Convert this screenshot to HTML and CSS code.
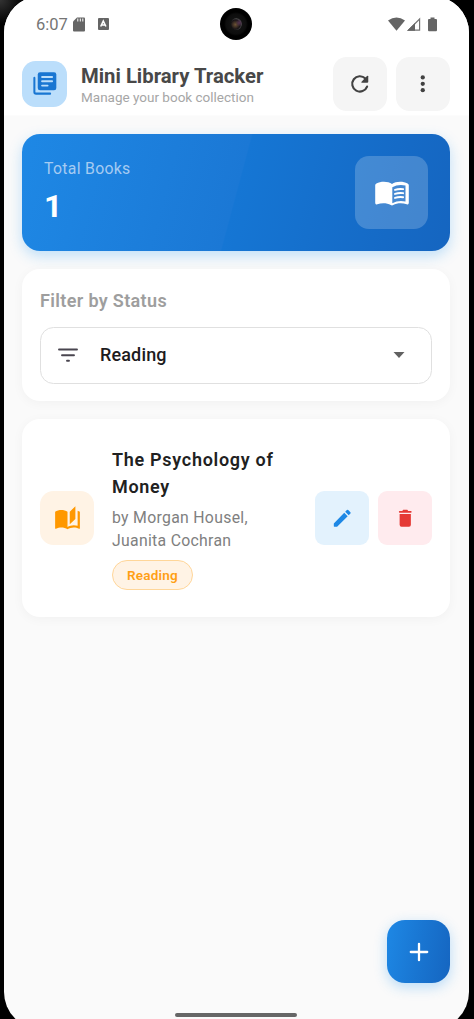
FILE: index.html
```html
<!DOCTYPE html>
<html lang="en">
<head>
<meta charset="utf-8">
<title>Mini Library Tracker</title>
<link rel="stylesheet" href="styles.css">
</head>
<body>
<div class="device">
<div class="screen">
  <div class="statusbar">
    <span class="clock">6:07</span>
    <svg class="sd" viewBox="0 0 12 15"><path fill="#656565" d="M4 .5h7q1 0 1 1v12q0 1-1 1H1q-1 0-1-1v-9z"/><path stroke="#fff" stroke-width="1" d="M4.800 1.500v3M7.300 1.500v3M9.800 1.500v3"/></svg>
    <svg class="abadge" viewBox="0 0 11 12"><rect width="11" height="12" rx="1" fill="#656565"/><path fill="none" stroke="#fff" stroke-width="1.600" d="M2.700 8.500 5.300 3l2.600 5.500M3.800 7h3"/></svg>
    <svg class="signals" viewBox="0 0 50 15"><path fill="#656565" d="M0 3.600Q8.500-2.600 17 3.600L8.500 13.800z"/><path fill="none" stroke="#757575" stroke-width="1.200" d="M20.500 13.200H31.600V2z"/><path fill="#656565" d="M19 13.800 27 6v7.800zM42.500.4h4V2H48q1 0 1 1v10q0 1.200-1 1.200h-7q-1 0-1-1.200V3q0-1 1-1h1.500z"/></svg>
    <div class="camera"><i></i></div>
  </div>
  <header class="appbar">
    <div class="logo"><svg viewBox="0 0 24 24" width="27" height="27"><path fill="none" stroke="#1976d2" stroke-width="1.800" stroke-linecap="round" stroke-linejoin="round" d="M3 7v12.500Q3 21 4.500 21H17"/><rect x="6" y="2" width="16.500" height="16" rx="2" fill="#1976d2"/><path stroke="#bbdefb" stroke-width="1.600" stroke-linecap="round" d="M9.800 6.200h9M9.800 10h9M9.800 13.800h5"/></svg></div>
    <div class="heading"><h1>Mini Library Tracker</h1><p>Manage your book collection</p></div>
    <button class="tool"><svg viewBox="0 0 24 24" width="27" height="27"><path fill="none" stroke="#424242" stroke-width="2" stroke-linecap="round" d="M18.900 14.600A7.200 7.200 0 1 1 17.300 7.100"/><path fill="#424242" d="M20 5v5q0 1-1 1h-5q-1 0-.3-.8L18.800 4.700q1.200-.8 1.200.3z"/></svg></button>
    <button class="tool"><svg viewBox="0 0 24 24" width="27" height="27" fill="#424242"><circle cx="12" cy="6" r="2"/><circle cx="12" cy="12" r="2"/><circle cx="12" cy="18" r="2"/></svg></button>
  </header>
  <main class="content">
    <section class="total">
      <div><p class="total-label">Total Books</p><p class="total-count">1</p></div>
      <div class="total-icon"><svg viewBox="0 0 24 24" width="36" height="36"><path fill="#fff" d="M12 6C9.500 4 4.500 4 1.600 5.600Q.8 6 .8 6.800V18.500q0 1.500 1.400 1C5 18.500 8.800 18.600 11.200 20q.8.500 1.600 0c2.400-1.400 6.200-1.500 9-.5q1.400.5 1.400-1V6.800q0-.8-.8-1.200C19.500 4 14.500 4 12 6z"/><path fill="#4689d2" d="M12.200 8.200Q16 5.900 21 7v10.700q-4.800-1-8.800 1.100z"/><path fill="none" stroke="#fff" stroke-width="1.300" stroke-linecap="round" d="M14 9.900q2.500-.9 5.400-.5M14 12.600q2.500-.9 5.400-.5M14 15.300q2.500-.9 5.400-.5"/></svg></div>
    </section>
    <section class="card filter">
      <h2>Filter by Status</h2>
      <div class="select">
        <svg viewBox="0 0 20 14" width="20" height="14"><path stroke="#49454f" stroke-width="1.900" stroke-linecap="round" d="M1 1.500h18M4 7.200h12M9 12.700h2"/></svg>
        <span>Reading</span>
        <svg class="caret" viewBox="0 0 12 6" width="12" height="6"><path fill="#616161" d="M.5 0h11L6 6z"/></svg>
      </div>
    </section>
    <section class="card book">
      <div class="cover"><svg viewBox="0 0 24 24" width="27" height="27" fill="#ff9800"><path d="M19 1l-5 5v11l5-4.500zM1 6v14.650c0 .25.25.5.5.5.1 0 .15-.05.25-.05C3.100 20.450 5.050 20 6.500 20c1.950 0 4.050.4 5.500 1.500V6c-1.450-1.100-3.550-1.500-5.500-1.500S2.450 4.900 1 6zM23 19.500V6c-.6-.45-1.250-.75-2-1v13.500c-1.100-.35-2.300-.5-3.500-.5-1.700 0-4.150.65-5.500 1.500v2c1.350-.85 3.800-1.500 5.500-1.500 1.650 0 3.350.3 4.750 1.050.5.200.75-.1.750-.45z"/></svg></div>
      <div class="info">
        <h3>The Psychology of<br>Money</h3>
        <p>by Morgan Housel,<br>Juanita Cochran</p>
        <span class="chip">Reading</span>
      </div>
      <button class="action edit"><svg viewBox="0 0 24 24" width="22.500" height="22.500" fill="#1e88e5"><path d="M3 17.500V20.500q0 .5.5.5H6.500L17.800 9.900 14.100 6.200zM20.700 7.040a1 1 0 0 0 0-1.410L18.370 3.290a1 1 0 0 0-1.410 0L15.130 5.120 18.880 8.870z"/></svg></button>
      <button class="action delete"><svg viewBox="0 0 24 24" width="22.500" height="22.500" fill="#e53935"><path d="M6 7.500h12V19q0 2-2 2H8q-2 0-2-2zM6 4.200h2.800l1-1.200h4.400l1 1.200H18q.8 0 .8.900T18 6H6q-.8 0-.8-.9T6 4.200z"/></svg></button>
    </section>
  </main>
  <button class="fab"><svg viewBox="0 0 20 20" width="20" height="20"><path stroke="#fff" stroke-width="2.300" stroke-linecap="round" d="M10 1.800v16.400M1.800 10h16.400"/></svg></button>
  <div class="home-pill"></div>
</div>
</div>
</body>
</html>
```
FILE: styles.css
```css
* { box-sizing: border-box; margin: 0; padding: 0; }
body { background: #000; font-family: Roboto, "Liberation Sans", sans-serif; overflow: hidden; }
button { border: 0; font: inherit; }
svg { display: block; flex: none; }
.device { height: 1019px; padding: 0 5px 0 4px; overflow: hidden; background: radial-gradient(circle at 0 0, #333 0, #000 24px), #000; }
.screen { position: relative; height: 1033px; margin-top: -4px; border-radius: 37px; background: #fafafa; overflow: hidden; }
.statusbar { position: relative; display: flex; align-items: center; height: 52px; padding: 4px 31px 0 32px; background: #fff; }
.clock { font-size: 16.500px; color: #757575; width: 37px; }
.sd { width: 12px; height: 15px; }
.abadge { width: 11px; height: 12px; margin-left: 13px; }
.signals { width: 50px; height: 15px; margin-left: auto; }
.camera { position: absolute; left: 216px; top: 12px; width: 32px; height: 32px; border-radius: 50%; background: radial-gradient(circle, #171717 0, #0d0d0d 10px, #000 12px); }
.camera i { position: absolute; left: 11px; top: 10px; width: 11px; height: 12px; border-radius: 50%; background: radial-gradient(circle at 75% 40%, #563453 0, transparent 35%), radial-gradient(circle at 40% 55%, #6d5335 0, #171216 50%, #444 65%, #111 80%); }
.appbar { display: flex; align-items: center; height: 68px; padding: 8px 19px 4px 18px; background: #fff; border-bottom: 1px solid #fcfcfc; }
.logo { display: grid; place-items: center; width: 45px; height: 46px; border-radius: 13.500px; background: #bbdefb; }
.logo svg { margin-right: 1px; }
.heading { flex: 1; margin-left: 14px; white-space: nowrap; }
.heading h1 { margin-top: 3px; font-size: 20.300px; line-height: 24px; font-weight: 700; color: #484848; }
.heading p { font-size: 13.500px; line-height: 18px; color: #a6a6a6; }
.tool { display: grid; place-items: center; width: 54px; height: 54px; border-radius: 13.500px; background: #f5f5f5; margin-left: 9px; }
.tool svg { width: 25.500px; height: 25.500px; }
.content { display: flex; flex-direction: column; gap: 18px; padding: 18px 19px 0 18px; }
.total { display: flex; justify-content: space-between; height: 117px; padding: 22px; border-radius: 18px; background: linear-gradient(105deg, #1e88e5 0%, #1b78d5 50%, #1576d4 50.300%, #1565c0 100%); box-shadow: 0 5px 14px rgba(33, 150, 243, .27); }
.total-label { margin-top: 3px; font-size: 15.800px; line-height: 20px; letter-spacing: .3px; color: #a5cbf2; }
.total-count { margin-top: 9px; font-size: 32px; line-height: 36px; font-weight: 700; color: #fff; }
.total-icon { display: grid; place-items: center; width: 73px; height: 73px; border-radius: 14px; background: rgba(255, 255, 255, .2); }
.card { border-radius: 18px; background: #fff; box-shadow: 0 2px 12px rgba(0, 0, 0, .04); }
.filter { height: 132px; padding: 21px 18px 18px; }
.filter h2 { font-size: 18px; line-height: 22px; font-weight: 600; letter-spacing: .35px; color: #9e9e9e; }
.select { display: flex; align-items: center; height: 57px; margin-top: 15px; padding: 0 26px 2px 17px; border: 1px solid #e0e0e0; border-radius: 13.500px; }
.select span { flex: 1; margin-left: 22px; font-size: 18px; font-weight: 500; letter-spacing: .15px; color: #1d1b20; }
.book { display: flex; align-items: center; height: 198px; padding: 0 18px; }
.cover { display: grid; place-items: center; width: 54px; height: 54px; border-radius: 13.500px; background: #fff3e5; }
.info { flex: 1; margin-left: 18px; white-space: nowrap; }
.info h3 { font-size: 18px; line-height: 27px; font-weight: 600; letter-spacing: .7px; color: #212121; }
.info p { margin-top: 6px; font-size: 15.800px; line-height: 23px; letter-spacing: .3px; color: #808080; }
.chip { display: inline-flex; align-items: center; height: 30px; margin-top: 8px; padding: 0 14px; border: 1px solid #ffd699; border-radius: 16px; background: #fff3e5; color: #ff9f14; font-size: 13.500px; font-weight: 600; letter-spacing: .2px; }
.action { display: grid; place-items: center; width: 54px; height: 54px; border-radius: 9px; }
.edit { background: #e3f2fd; }
.delete { margin-left: 9px; background: #ffebee; }
.fab { position: absolute; right: 19px; top: 924px; display: grid; place-items: center; width: 63px; height: 63px; border-radius: 18px; background: linear-gradient(100deg, #1e88e5, #1976d2 50%, #1565c0); box-shadow: 0 4px 13px rgba(33, 150, 243, .3); }
.home-pill { position: absolute; left: 171px; top: 1017px; width: 122px; height: 4px; border-radius: 2px; background: #666; }
```
